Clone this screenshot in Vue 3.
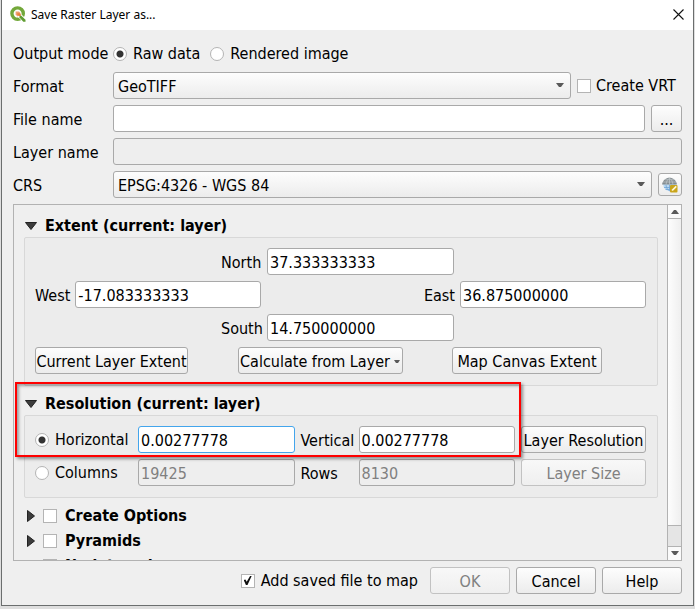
<script setup>
import { ref } from 'vue'

const mode = ref('raw')
const resMode = ref('horizontal')
const fileName = ref('')
const extent = ref({
  north: '37.333333333',
  west: '-17.083333333',
  east: '36.875000000',
  south: '14.750000000',
})
const res = ref({ horizontal: '0.00277778', vertical: '0.00277778', columns: '19425', rows: '8130' })
const collapsed = ref([
  { id: 'create', label: 'Create Options', on: false },
  { id: 'pyramids', label: 'Pyramids', on: false },
  { id: 'nodata', label: 'Nodata values', on: false },
])
const vrt = ref(false)
const addToMap = ref(true)
</script>

<template>
  <div class="desktop">
    <main class="dialog">
      <header class="titlebar">
        <svg class="logo" viewBox="0 0 16 16" aria-hidden="true">
          <circle cx="7.600" cy="7.600" r="5.700" fill="none" stroke="#73a83a" stroke-width="3.400" />
          <path d="M6.500 9.500l3-3 6.500 6.500v3h-3z" fill="#fff" />
          <path d="M9 11l1.800-1.800 4.700 4.600v1.900h-2.200z" fill="#5f9c31" />
          <path d="M5.600 5.600h3.400l1.700 1.700-3.200 3.200-1.900-1.900z" fill="#f0a070" />
          <path d="M7.300 7.300h2.500l1 1v1.600H8.700L7.300 8.600z" fill="#e8803c" />
        </svg>
        <h1>Save Raster Layer as...</h1>
        <button class="close" type="button" aria-label="Close">
          <svg viewBox="0 0 11 11"><path d="M.5.5l10 10M10.500.5l-10 10" fill="none" stroke="#111" stroke-width="1.1" /></svg>
        </button>
      </header>

      <form class="body" @submit.prevent>
        <div class="line modes" role="radiogroup" aria-label="Output mode">
          <span class="mode-title">Output mode</span>
          <label class="check"><input v-model="mode" type="radio" name="mode" value="raw" />Raw data</label>
          <label class="check second"><input v-model="mode" type="radio" name="mode" value="rendered" />Rendered image</label>
        </div>

        <div class="line field">
          <label for="format">Format</label>
          <div class="combo">
            <select id="format"><option>GeoTIFF</option></select>
            <svg class="arrow" viewBox="0 0 8 5"><path d="M0 0h8L5 4H3z" fill="#5a5a5a" /></svg>
          </div>
          <label class="check vrt"><input v-model="vrt" type="checkbox" />Create VRT</label>
        </div>
        <div class="line field">
          <label for="file">File name</label>
          <input id="file" v-model="fileName" class="text" type="text" />
          <button class="btn browse" type="button">...</button>
        </div>
        <div class="line field">
          <label for="layer">Layer name</label>
          <input id="layer" class="text" type="text" disabled />
        </div>
        <div class="line field">
          <label for="crs">CRS</label>
          <div class="combo">
            <select id="crs"><option>EPSG:4326 - WGS 84</option></select>
            <svg class="arrow" viewBox="0 0 8 5"><path d="M0 0h8L5 4H3z" fill="#5a5a5a" /></svg>
          </div>
          <button class="btn globe" type="button" aria-label="Select CRS">
            <svg viewBox="0 0 16 16">
              <circle cx="7.500" cy="7.500" r="6.300" fill="#b9d8f2" />
              <path d="M0 7.500C1 3 4 .8 7.500.8S14 3 15 7.500z" fill="#858d91" />
              <path d="M1 5h13M3 2.800h9M4 7.500C4.500 4 6 2 7.500 1 9 2 10.500 4 11 7.500M7.500 1v6.500" fill="none" stroke="#c3cacd" stroke-width=".7" />
              <path d="M2 10.500h6M3.500 12.500h4.500M4 8c.3 3 1.800 5 3.500 6V8" fill="none" stroke="#6fa5d6" stroke-width=".8" />
              <rect x="8" y="8" width="7.500" height="7.500" rx="1" fill="#c9a51b" />
              <path d="M9.700 14l.5-1.800 3.500-3.400 1.100 1.100-3.500 3.500z" fill="#fff8d8" />
            </svg>
          </button>
        </div>

        <div class="pane">
          <div class="scroll">
            <section>
              <h2><svg class="tri" viewBox="0 0 12 8"><path d="M.5.5h11L6 7.500z" fill="#3c3c3c" stroke="#222" /></svg>Extent (current: layer)</h2>
              <div class="group">
                <div class="centered">
                  <label for="north">North</label>
                  <input id="north" v-model="extent.north" class="text" type="text" />
                </div>
                <div class="sides">
                  <div class="pair">
                    <label for="west">West</label>
                    <input id="west" v-model="extent.west" class="text" type="text" />
                  </div>
                  <div class="pair">
                    <label for="east">East</label>
                    <input id="east" v-model="extent.east" class="text" type="text" />
                  </div>
                </div>
                <div class="centered">
                  <label for="south">South</label>
                  <input id="south" v-model="extent.south" class="text" type="text" />
                </div>
                <div class="actions">
                  <button class="btn current" type="button">Current Layer Extent</button>
                  <button class="btn calc" type="button">
                    Calculate from Layer
                    <svg viewBox="0 0 6 4"><path d="M0 0h6L4 3H2z" fill="#5a5a5a" /></svg>
                  </button>
                  <button class="btn canvas" type="button">Map Canvas Extent</button>
                </div>
              </div>
            </section>

            <section>
              <h2><svg class="tri" viewBox="0 0 12 8"><path d="M.5.5h11L6 7.500z" fill="#3c3c3c" stroke="#222" /></svg>Resolution (current: layer)</h2>
              <div class="group resolution">
                <label class="check"><input v-model="resMode" type="radio" name="res" value="horizontal" />Horizontal</label>
                <input v-model="res.horizontal" class="text active" type="text" aria-label="Horizontal resolution" />
                <label for="vertical">Vertical</label>
                <input id="vertical" v-model="res.vertical" class="text" type="text" />
                <button class="btn" type="button">Layer Resolution</button>

                <label class="check"><input v-model="resMode" type="radio" name="res" value="columns" />Columns</label>
                <input v-model="res.columns" class="text" type="text" aria-label="Column count" disabled />
                <label for="rows">Rows</label>
                <input id="rows" v-model="res.rows" class="text" type="text" disabled />
                <button class="btn" type="button" disabled>Layer Size</button>
              </div>
              <div class="highlight"></div>
            </section>

            <div class="folds">
              <label v-for="f in collapsed" :key="f.id" class="fold">
                <svg class="side-tri" viewBox="0 0 8 12"><path d="M.5.5v11L7.500 6z" fill="#3c3c3c" stroke="#222" /></svg>
                <input v-model="f.on" type="checkbox" />{{ f.label }}
              </label>
            </div>
          </div>
          <div class="bar">
            <button type="button" aria-label="Scroll up"><svg viewBox="0 0 8 5"><path d="M0 5h8L5 1H3z" fill="#5a5a5a" /></svg></button>
            <div class="track"><div class="thumb"></div></div>
            <button type="button" aria-label="Scroll down"><svg viewBox="0 0 8 5"><path d="M0 0h8L5 4H3z" fill="#5a5a5a" /></svg></button>
          </div>
        </div>

        <footer>
          <label class="check add"><input v-model="addToMap" type="checkbox" />Add saved file to map</label>
          <button class="btn" type="submit" disabled>OK</button>
          <button class="btn" type="button">Cancel</button>
          <button class="btn" type="button">Help</button>
        </footer>
      </form>
    </main>
  </div>
</template>

<style>
body {
  background: #dedede;
}
</style>

<style scoped>
* {
  box-sizing: border-box;
}
.desktop {
  display: flex;
  height: 100vh;
  padding: 0 1px 3px;
  font: 16px/20px "DejaVu Sans Condensed", "Noto Sans", sans-serif;
  color: #000;
}
.dialog {
  flex: 1;
  min-width: 0;
  display: flex;
  flex-direction: column;
  background: #efefef;
  border: 1px solid #6b6e6e;
  border-top: 0;
}
.titlebar {
  display: flex;
  align-items: center;
  gap: 5px;
  height: 30px;
  padding: 0 9px 2px 8px;
  background: #fff;
}
.logo {
  width: 16px;
  height: 16px;
}
h1 {
  flex: 1;
  margin: 0;
  padding-top: 2px;
  font: 12px/16px "Noto Sans", sans-serif;
}
.close {
  display: flex;
  padding: 0;
  border: 0;
  background: none;
}
.close svg {
  width: 11px;
  height: 11px;
}
.body {
  flex: 1;
  min-height: 0;
  display: flex;
  flex-direction: column;
  gap: 6px;
  padding: 12px 11px 11px 11px;
}
.line {
  display: flex;
  align-items: center;
  gap: 6px;
}
.modes {
  height: 24px;
}
.mode-title {
  width: 94px;
  white-space: nowrap;
}
.second {
  margin-left: 4px;
}
.field {
  height: 27px;
}
.field > label:first-child {
  width: 94px;
}
label:not(.check, .fold) {
  padding-top: 2px;
}
.combo {
  flex: 1;
  display: grid;
  align-items: center;
}
.combo > * {
  grid-area: 1 / 1;
}
.arrow {
  justify-self: end;
  width: 8px;
  height: 5px;
  margin-right: 7px;
  pointer-events: none;
}
select,
.text,
.btn {
  height: 27px;
  min-width: 0;
  margin: 0;
  border: 1px solid #a9a9a9;
  border-radius: 3px;
  font: inherit;
  color: #000;
  outline: 0;
}
select {
  appearance: none;
  width: 100%;
  padding: 2px 20px 0 4px;
  background: linear-gradient(#fdfdfd, #ececec);
}
.text {
  flex: 1;
  width: 100%;
  padding: 2px 2px 0;
  background: #fff;
}
.text:disabled {
  background: #eee;
  color: #808080;
}
.text.active {
  border-color: #43a5ec;
}
.btn {
  padding: 2px 0 0;
  background: linear-gradient(#fdfdfd, #ececec);
  white-space: nowrap;
}
.btn:disabled {
  border-color: #c2c2c2;
  background: linear-gradient(#f8f8f8, #efefef);
  color: #808080;
}
.browse {
  width: 31px;
}
.globe {
  display: flex;
  align-items: center;
  justify-content: center;
  width: 24px;
  height: 23px;
  padding: 0;
}
.globe svg {
  width: 16px;
  height: 16px;
}
.check {
  display: flex;
  align-items: center;
  gap: 6px;
  white-space: nowrap;
}
.vrt {
  width: 105px;
  gap: 5px;
}
input[type="radio"],
input[type="checkbox"] {
  appearance: none;
  flex: none;
  display: grid;
  place-items: center;
  width: 14px;
  height: 14px;
  margin: 0;
  border: 1px solid #b4b4b4;
  background: #fff;
}
input[type="radio"] {
  border-radius: 50%;
}
input[type="radio"]:checked {
  background: radial-gradient(circle, #333 0 3px, #fff 4px);
}
input[type="checkbox"]:checked::before {
  content: "";
  width: 8px;
  height: 9px;
  background: #111;
  clip-path: polygon(0 45%, 22% 40%, 38% 65%, 80% 0, 100% 0, 48% 100%, 28% 100%);
}
.pane {
  flex: 1;
  min-height: 0;
  display: flex;
  border: 1px solid #b2b2b2;
}
.scroll {
  flex: 1;
  min-width: 0;
  overflow: hidden;
  padding: 8px 9px 0 10px;
}
section {
  position: relative;
  margin-bottom: 5px;
}
h2 {
  display: flex;
  align-items: center;
  gap: 8px;
  margin: 0;
  padding: 3px 0 1px 1px;
  font: inherit;
  font-weight: bold;
}
.tri {
  width: 12px;
  height: 8px;
}
.group {
  display: grid;
  gap: 6px;
  padding: 10px 11px 11px 10px;
  border: 1px solid #d8d8d8;
  border-radius: 2px;
  background: #ececec;
}
.centered,
.pair {
  display: flex;
  align-items: center;
  gap: 6px;
}
.centered {
  justify-content: center;
  padding-right: 6px;
}
.centered label {
  width: 40px;
  text-align: right;
}
.centered .text {
  flex: 0 1 187px;
}
.sides {
  display: flex;
  justify-content: space-between;
}
.pair {
  gap: 5px;
}
.pair .text {
  flex: 0 1 186px;
}
.actions {
  display: flex;
  justify-content: space-between;
  padding-right: 44px;
}
.current {
  width: 153px;
}
.calc {
  display: flex;
  align-items: center;
  justify-content: center;
  gap: 4px;
  width: 165px;
}
.calc svg {
  width: 6px;
  height: 4px;
}
.canvas {
  width: 150px;
}
.resolution {
  grid-template-columns: 97px 1fr 52px 1fr 125px;
  align-items: center;
}
.highlight {
  position: absolute;
  top: -9px;
  left: -9px;
  width: calc(80% - 1px);
  height: 75px;
  border: 2px solid #f00;
  box-shadow: 2px 2px 3px #0006, inset 2px 2px 3px #0005;
  pointer-events: none;
}
.folds {
  display: grid;
}
.fold {
  display: flex;
  align-items: center;
  height: 25px;
  padding-left: 3px;
  font-weight: bold;
}
.side-tri {
  width: 8px;
  height: 12px;
  margin-right: 8px;
}
.fold input {
  margin-right: 8px;
}
.bar {
  display: flex;
  flex-direction: column;
  width: 14px;
  border-left: 1px solid #b2b2b2;
}
.bar button {
  display: flex;
  align-items: center;
  justify-content: center;
  height: 13px;
  padding: 0;
  border: 0;
  background: #fafafa;
}
.bar svg {
  width: 8px;
  height: 5px;
}
.track {
  flex: 1;
  border: solid #b2b2b2;
  border-width: 1px 0;
  background: #e5e5e5;
}
.thumb {
  height: 94%;
  border-bottom: 1px solid #b2b2b2;
  background: linear-gradient(90deg, #fdfdfd, #efefef);
}
footer {
  display: flex;
  align-items: center;
  justify-content: flex-end;
  gap: 6px;
}
footer .btn {
  width: 80px;
}
.add {
  margin-right: 6px;
}
</style>
